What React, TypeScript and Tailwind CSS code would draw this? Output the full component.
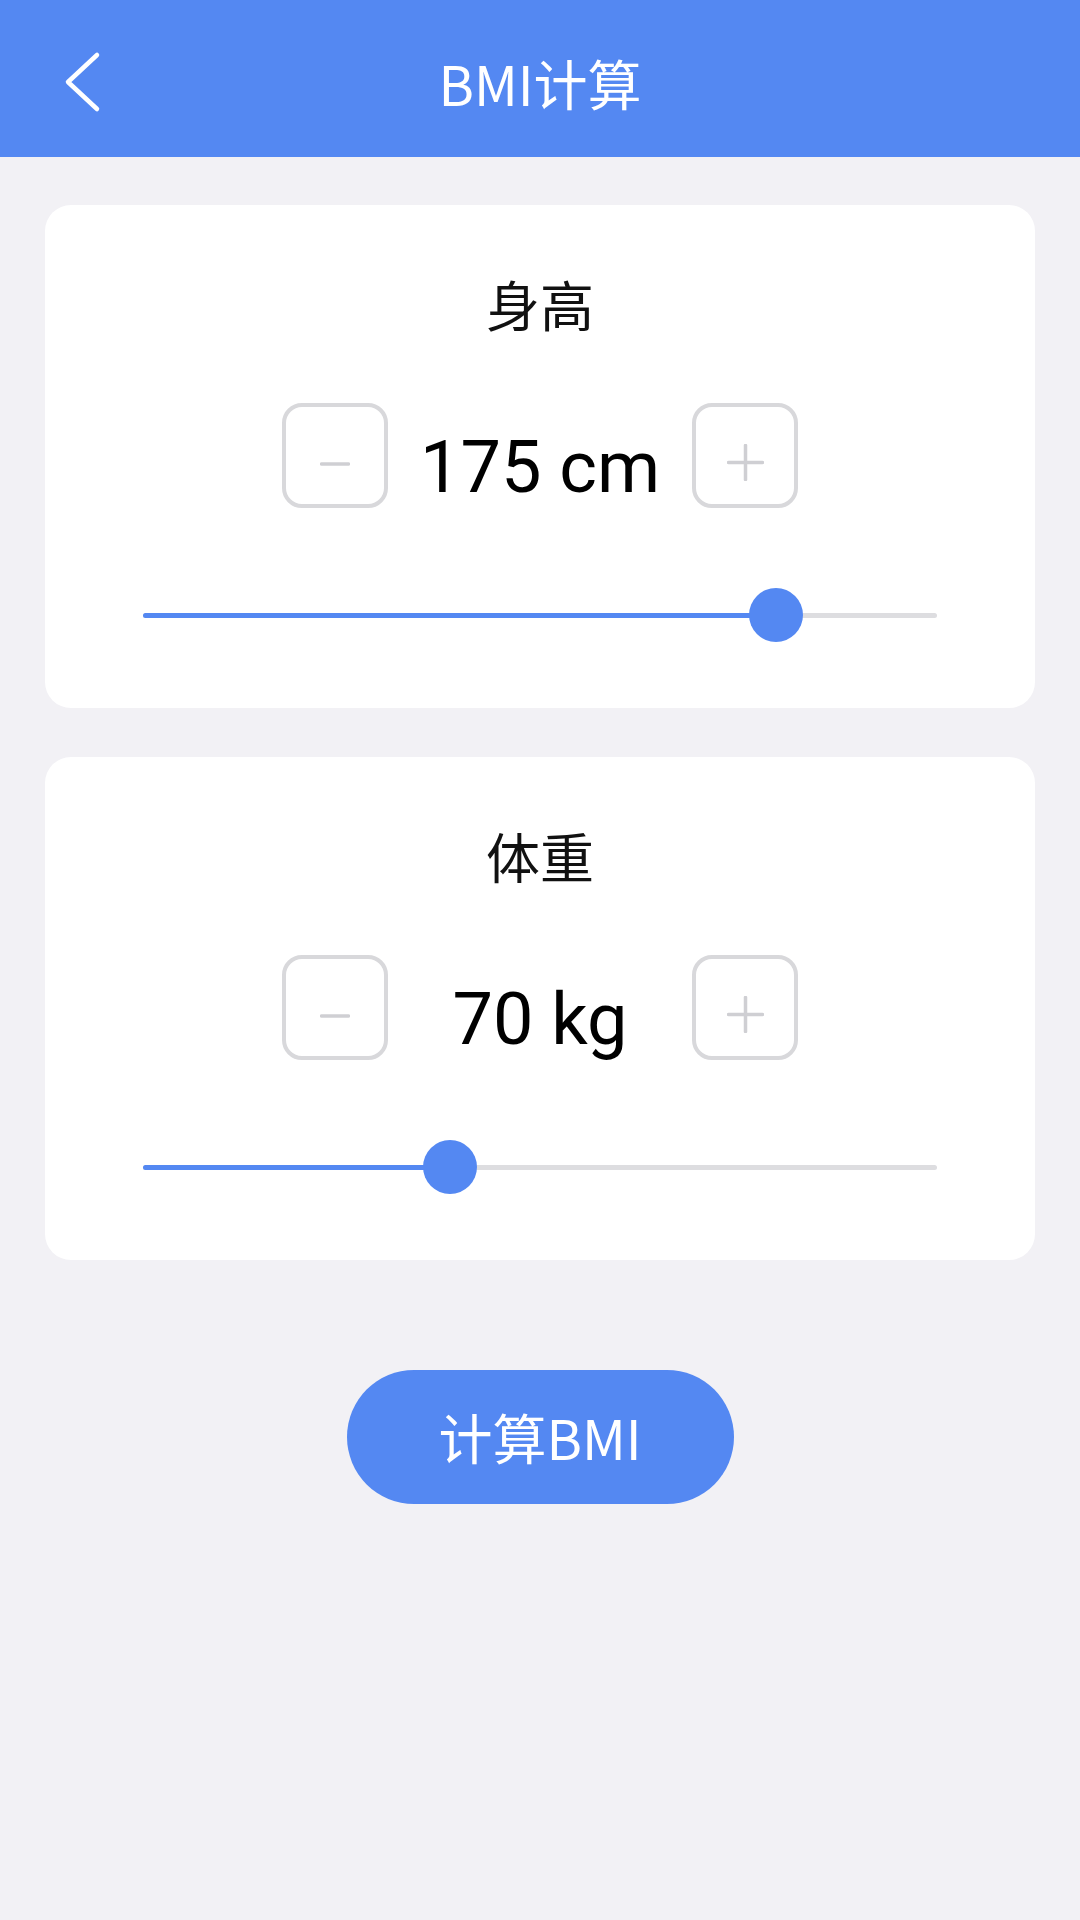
import React from "react";

const cjk = { fontFamily: '"Noto Sans CJK SC", "Noto Sans", sans-serif' };
const num = { fontFamily: 'Roboto, "Noto Sans", sans-serif' };

function MinusIcon() {
  return (
    <svg width="30" height="8" viewBox="0 0 30 8" className="mt-[17px]">
      <line x1="1.5" y1="4" x2="28.5" y2="4" stroke="#cfcfd3" strokeWidth="3.5" strokeLinecap="round" />
    </svg>
  );
}

function PlusIcon() {
  return (
    <svg width="37" height="37" viewBox="0 0 37 37" className="mt-[13px]">
      <line x1="1.5" y1="18.5" x2="35.5" y2="18.5" stroke="#cfcfd3" strokeWidth="3.5" strokeLinecap="round" />
      <line x1="18.5" y1="1.5" x2="18.5" y2="35.5" stroke="#cfcfd3" strokeWidth="3.5" strokeLinecap="round" />
    </svg>
  );
}

function Card({
  label,
  value,
  fill,
}: {
  label: string;
  value: string;
  fill: "h" | "w";
}) {
  return (
    <div className="h-[503px] w-full rounded-[26px] bg-white pt-[67px]">
      <div className="h-[64px] text-center text-[54px] leading-[64px] text-[#111]" style={cjk}>
        {label}
      </div>
      <div className="mt-[67px] flex h-[105px] justify-center">
        <button className="flex h-[105px] w-[106px] items-center justify-center rounded-[20px] border-[4px] border-[#d8d8db] bg-white">
          <MinusIcon />
        </button>
        <div
          className="flex h-[105px] w-[304px] items-center justify-center pt-[24px] text-[72px] leading-none text-black"
          style={num}
        >
          {value}
        </div>
        <button className="flex h-[105px] w-[106px] items-center justify-center rounded-[20px] border-[4px] border-[#d8d8db] bg-white">
          <PlusIcon />
        </button>
      </div>
      <div className="mt-[80px] px-[98px]">
        <div className="relative flex h-[54px] items-center">
          <div className="h-[5px] w-full rounded-full bg-[#dddde0]" />
          {fill === "h" ? (
            <>
              <div className="absolute left-0 top-[25px] h-[5px] w-[633px] rounded-full bg-[#5488f2]" />
              <div className="absolute left-[606px] top-0 h-[54px] w-[54px] rounded-full bg-[#5488f2]" />
            </>
          ) : (
            <>
              <div className="absolute left-0 top-[25px] h-[5px] w-[307px] rounded-full bg-[#5488f2]" />
              <div className="absolute left-[280px] top-0 h-[54px] w-[54px] rounded-full bg-[#5488f2]" />
            </>
          )}
        </div>
      </div>
    </div>
  );
}

export default function App() {
  return (
    <div className="min-h-[1920px] w-full bg-[#f2f1f5]" style={cjk}>
      <header className="relative flex h-[157px] w-full items-center justify-center bg-[#5488f2]">
        <svg
          width="40"
          height="64"
          viewBox="0 0 40 64"
          className="absolute left-[62px] top-[50px]"
        >
          <polyline
            points="35,5 6,32 35,59"
            fill="none"
            stroke="#ffffff"
            strokeWidth="4.5"
            strokeLinecap="round"
            strokeLinejoin="round"
          />
        </svg>
        <h1 className="pt-[8px] text-[54px] font-normal leading-none text-white" style={cjk}>
          BMI计算
        </h1>
      </header>
      <main className="flex flex-col items-center px-[45px] pt-[48px]">
        <Card label="身高" value="175 cm" fill="h" />
        <div className="h-[49px]" />
        <Card label="体重" value="70 kg" fill="w" />
        <button
          className="mt-[110px] flex h-[134px] w-[387px] items-center justify-center rounded-full bg-[#5488f2] text-[54px] leading-none text-white"
          style={cjk}
        >
          计算BMI
        </button>
      </main>
    </div>
  );
}
